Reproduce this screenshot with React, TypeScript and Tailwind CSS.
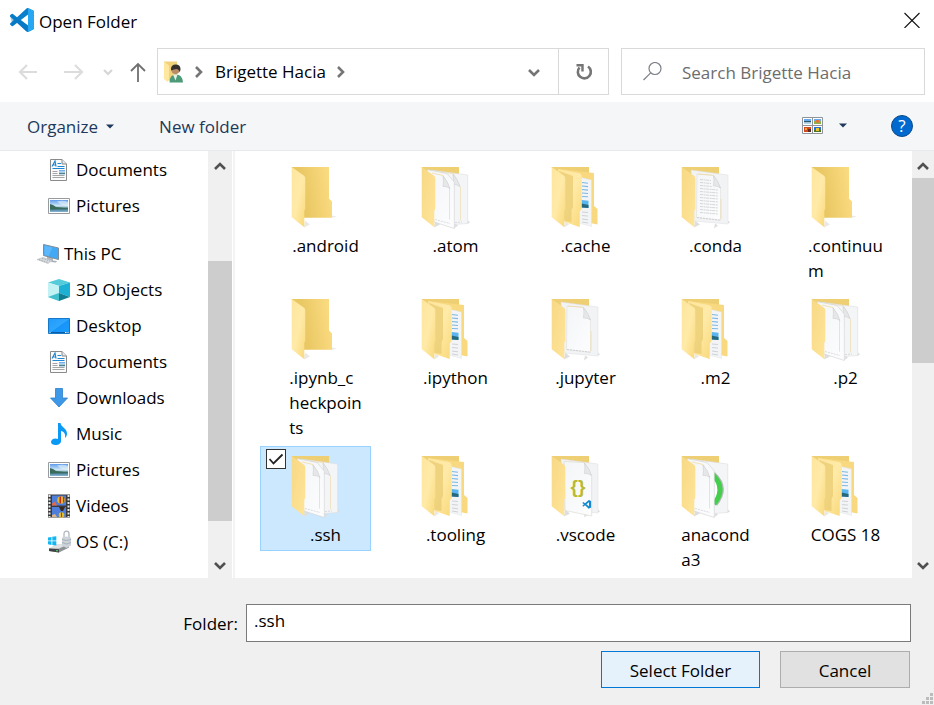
import { useState } from 'react';
import type { ReactNode } from 'react';

type FolderKind = 'empty' | 'papers' | 'nested' | 'text' | 'blank' | 'vscode' | 'disc';

const folders: { lines: string[]; kind: FolderKind }[] = [
  { lines: ['.android'], kind: 'empty' },
  { lines: ['.atom'], kind: 'papers' },
  { lines: ['.cache'], kind: 'nested' },
  { lines: ['.conda'], kind: 'text' },
  { lines: ['.continuu', 'm'], kind: 'empty' },
  { lines: ['.ipynb_c', 'heckpoin', 'ts'], kind: 'empty' },
  { lines: ['.ipython'], kind: 'nested' },
  { lines: ['.jupyter'], kind: 'blank' },
  { lines: ['.m2'], kind: 'nested' },
  { lines: ['.p2'], kind: 'papers' },
  { lines: ['.ssh'], kind: 'papers' },
  { lines: ['.tooling'], kind: 'nested' },
  { lines: ['.vscode'], kind: 'vscode' },
  { lines: ['anacond', 'a3'], kind: 'disc' },
  { lines: ['COGS 18'], kind: 'nested' },
];

const VSCODE_PATH =
  'M23.15 2.587L18.21.21a1.494 1.494 0 0 0-1.705.29l-9.46 8.63-4.12-3.128a.999.999 0 0 0-1.276.057L.327 7.261A1 1 0 0 0 .326 8.74L3.899 12 .326 15.26a1 1 0 0 0 .001 1.479L1.65 17.94a.999.999 0 0 0 1.276.057l4.12-3.128 9.46 8.63a1.492 1.492 0 0 0 1.704.29l4.942-2.377A1.5 1.5 0 0 0 24 20.06V3.939a1.5 1.5 0 0 0-.85-1.352zm-5.146 14.861L10.826 12l7.178-5.448v10.896z';

/* Gradients shared by every drawing on the page. */
function SharedDefs() {
  return (
    <svg className="absolute size-0" aria-hidden="true">
      <defs>
        <linearGradient id="back" x1="0" x2="1" y1="0.6" y2="0.4">
          <stop offset="0.3" stopColor="#e9c763" />
          <stop offset="1" stopColor="#fbdc82" />
        </linearGradient>
        <linearGradient id="flap" x1="0" x2="1" y1="0" y2="1">
          <stop offset="0" stopColor="#fde59c" />
          <stop offset="0.5" stopColor="#ffeaa8" />
          <stop offset="1" stopColor="#f9d878" />
        </linearGradient>
        <linearGradient id="flapDeep" x1="0" x2="1" y1="0" y2="1">
          <stop offset="0" stopColor="#f7d884" />
          <stop offset="1" stopColor="#ffe59a" />
        </linearGradient>
        <linearGradient id="paper" x1="0" x2="1" y1="0" y2="1">
          <stop offset="0" stopColor="#f3f5f7" />
          <stop offset="1" stopColor="#fdfdfe" />
        </linearGradient>
        <linearGradient id="sky" x1="0" x2="0" y1="0" y2="1">
          <stop offset="0" stopColor="#5e9bea" />
          <stop offset="0.5" stopColor="#d4ecf8" />
          <stop offset="0.7" stopColor="#3f7573" />
          <stop offset="0.8" stopColor="#4f86a0" />
          <stop offset="1" stopColor="#8bb9d6" />
        </linearGradient>
        <linearGradient id="screen" x1="0" x2="1" y1="0" y2="1">
          <stop offset="0" stopColor="#1e9bfa" />
          <stop offset="0.5" stopColor="#2fa6fd" />
          <stop offset="0.52" stopColor="#1794f8" />
          <stop offset="1" stopColor="#1e9dfc" />
        </linearGradient>
      </defs>
    </svg>
  );
}

function Fold({ x, y }: { x: number; y: number }) {
  return (
    <path
      d={`M${x} ${y}q.8 5 0 10.500 3.500-.5 7 2-2-7-7-12.500z`}
      fill="#e6e7e9"
      stroke="#c8c9cc"
      strokeWidth="0.5"
    />
  );
}

function FolderIcon({ kind }: { kind: FolderKind }) {
  const deep = kind !== 'empty' && kind !== 'nested';
  return (
    <svg className="h-[66px] w-[50px]" viewBox="0 0 50 66" aria-hidden="true">
      {kind === 'empty' && (
        <>
          <path d="M14 62.500l6-3-5-4zM41 53l6-1.500-5-1z" fill="#e9e9ea" />
          <path d="M1.700 2H39v31.500l3 3v16.200H14z" fill="url(#back)" />
        </>
      )}
      {kind !== 'empty' && <path d="M1.700 2H39v20H10z" fill="#efcf73" />}
      {deep && <path d="M34 63.500l4-3-3-2zM47 59l3-1.500-2-2zM14 62.500l6-3-5-4z" fill="#dddee0" />}

      {kind === 'nested' && (
        <>
          <path d="M14 62.500l5-3-4-4z" fill="#e9e9ea" />
          <path d="M8 4l36 4v33l3.500 3v15.500L40 58z" fill="#f8d980" />
          <path d="M31 12.500l10.500 2.500v46.500L29 58z" fill="#f3f4f6" stroke="#dcdde0" strokeWidth="0.4" />
          <path
            d="M32 17.500l6 .8M32 21l6 .6M32 24.500l6 .6M32 28l6 .5M32 31.500l6 .3"
            stroke="#7cb9e3"
            strokeWidth="1.100"
          />
          <path d="M31.500 35l7 .8v7.200l-7-.5z" fill="#5bb5ee" />
          <path d="M31.500 38.500l7 1.500v3l-7-.5z" fill="#26697c" />
          <path d="M32 47l6 .5M32 50.500l6 .6M32 54l6 .8M32 57l6 1" stroke="#c5c9cd" strokeWidth="0.800" />
          <path d="M8 4l20.500 4q3.200.8 3.200 3v33l-2 2.500v15.500L14.500 57z" fill="url(#flap)" />
          <path d="M9 6l14 5v31l-1.500 3v12L14 56z" fill="#e5c566" opacity="0.6" />
        </>
      )}

      {(kind === 'papers' || kind === 'disc') && (
        <path d="M11 5l36.700 5v48.500L34 59.500z" fill="#f4f5f6" stroke="#d8d9dc" strokeWidth="0.500" />
      )}
      {kind === 'papers' && (
        <>
          <path d="M16 7l17 1.500 7.500 14v33" fill="none" stroke="#ecdcb2" strokeWidth="0.700" />
          <path d="M35 57.500l7-.5" stroke="#c4c6ca" strokeWidth="0.600" strokeDasharray="2 1" />
          <Fold x={33} y={9} />
        </>
      )}
      {kind === 'disc' && (
        <>
          <path d="M33 21q12 13 1 27" fill="#fff" />
          <path d="M33 20q15 14 2 30" fill="none" stroke="#b9b9bd" strokeWidth="5.500" />
          <path d="M32 20q15 14 2 30" fill="none" stroke="#43cf4b" strokeWidth="5" />
        </>
      )}
      {(kind === 'papers' || kind === 'disc') && (
        <>
          <path
            d="M7 4.500l20 4 7.300 8.500v46.500L14 57z"
            fill="url(#paper)"
            stroke="#cfd0d4"
            strokeWidth="0.600"
          />
          <path d="M12 8l11 2.500 6.500 13v31" fill="none" stroke="#f0d999" strokeWidth="0.700" />
          <path d="M15 54.500l15 4" stroke="#c4c6ca" strokeWidth="0.600" strokeDasharray="2 1" />
          <Fold x={23} y={11} />
        </>
      )}

      {(kind === 'text' || kind === 'blank' || kind === 'vscode') && (
        <path d="M11 5l37 5v49l-34-3z" fill="#f2f3f5" stroke="#dcdde0" strokeWidth="0.500" />
      )}
      {(kind === 'text' || kind === 'blank') && (
        <>
          <path
            d="M17 9l16.500 1.500 7 12.500V55.500l-24-3z"
            fill="url(#paper)"
            stroke="#dcdad2"
            strokeWidth="0.500"
          />
          <path d="M17.500 9l15 1.200M41 34v20" stroke="#f0dba4" strokeWidth="0.800" />
          <path d="M17 52.500l23 2.500" stroke="#bfc1c5" strokeWidth="0.700" strokeDasharray="2 1" />
          <Fold x={33.500} y={10.500} />
        </>
      )}
      {kind === 'text' && (
        <path
          d="M20 14.500l11 1M20 17.500l11 1M20 20.500l12 1M20 23.500l18 1.500M20 26.500l18 1.500M20 29.500l18 1.500M20 32.500l18 1.500M20 35.500l18 1.500M20 38.500l18 1.500M20 41.500l18 1.500M20 44.500l18 1.500M20 47.500l18 1.500"
          stroke="#cfd1d4"
          strokeWidth="0.900"
          strokeDasharray="3 0.6 2 0.5"
        />
      )}
      {kind === 'vscode' && (
        <>
          <path
            d="M14 7.500l20 1 7.700 13V62L15 56.500z"
            fill="url(#paper)"
            stroke="#d9d6cb"
            strokeWidth="0.600"
          />
          <Fold x={34.500} y={9} />
          <text
            x="28"
            y="39"
            textAnchor="middle"
            fontFamily="Liberation Sans, sans-serif"
            fontSize="19"
            fontWeight="bold"
            fill="#b9b932"
          >
            {'{}'}
          </text>
          <path d={VSCODE_PATH} transform="translate(32.500 46) scale(0.36)" fill="#1689d2" />
        </>
      )}

      <path
        d="M1.700 2l12 8.500q1.600 1.200 1.600 3V44l-1 1.700v16.600l-12.600-10z"
        fill={deep ? 'url(#flapDeep)' : 'url(#flap)'}
      />
    </svg>
  );
}

function VsCodeLogo() {
  return (
    <svg className="size-6" viewBox="0 0 24 24" aria-hidden="true">
      <path d={VSCODE_PATH} fill="#0a7fcc" />
      <path d="M2.900 18l4.100-3.100L16.500 23.500l1.500-6L.9 5.900.3 7.300v1.400z" fill="#0571b8" opacity="0.4" />
      <path d="M18 .1l5.200 2.500q.8.500.8 1.400v16q0 1-.8 1.400L18 23.900z" fill="#27a7f2" />
    </svg>
  );
}

function DocumentIcon() {
  return (
    <svg className="h-6 w-[22px]" viewBox="0 0 22 24" aria-hidden="true">
      <path d="M2.500 1.500h11.500l4.500 4.500v16.500h-16z" fill="#fbfbfb" stroke="#8a8a8a" />
      <path d="M14 1.500v4.500h4.500" fill="#e6e6e6" stroke="#8a8a8a" />
      <path d="M4 8.500l3-5.500 1 5.500M5 7h3" fill="none" stroke="#1c88d6" strokeWidth="1.200" />
      <path d="M9.500 5.500h3.500M9.500 8.500h7M4.500 10.500h12" stroke="#1c88d6" />
      <path d="M4.500 13.500h5M4.500 15.500h5M4.500 17.500h12M4.500 19.500h12" stroke="#a5a5a5" />
      <path d="M11 12h6v4.500h-6z" fill="url(#sky)" />
    </svg>
  );
}

function PictureIcon() {
  return (
    <svg className="h-6 w-[22px]" viewBox="0 0 22 24" aria-hidden="true">
      <path d="M.5 4.500h21v15H.5z" fill="#fff" stroke="#989b9e" />
      <path d="M2 6h18v12H2z" fill="url(#sky)" />
      <path d="M9 7.500q6-1.500 11 .5v4q-6 .5-11-4.500z" fill="#e6f4fa" opacity="0.6" />
      <path d="M2 10q3 .5 6 3l12 1.500v.5q-9 0-18 .5z" fill="#3b6b5a" />
    </svg>
  );
}

function ComputerIcon() {
  return (
    <svg className="h-6 w-6" viewBox="0 0 24 24" aria-hidden="true">
      <path d="M11 14l6 2v3l-6-1z" fill="#b3b8bd" />
      <path d="M7.500 2.500l15 3.500v11.500L7.500 13.500z" fill="#44a9f5" stroke="#7d8c9a" />
      <path d="M8.500 3.500l8 2-4 8.500-4-1z" fill="#75c5ff" opacity="0.5" />
      <path d="M1 17.500l6-2 9 3-4 3z" fill="#d9dde0" stroke="#aeb4ba" strokeWidth="0.600" />
      <path d="M3 17.500l9 3M6 16.500l8 2.500" stroke="#9da4ab" strokeWidth="0.800" strokeDasharray="1.500 1" />
      <path d="M16 18.500l5 .5-1 1.500-5-.5z" fill="#a8aeb4" />
    </svg>
  );
}

function CubeIcon() {
  return (
    <svg className="h-6 w-[22px]" viewBox="0 0 22 24" aria-hidden="true">
      <path d="M0 4.500L11 1l11 3.500L11 8z" fill="#53cbda" />
      <path d="M0 4.500L11 8v15L0 19z" fill="#b3ecf0" />
      <path d="M22 4.500L11 8v7l11 4z" fill="#1bb0d4" />
      <path d="M0 4.500L11 8v7L0 19z" fill="#c2f2f4" />
      <path d="M0 19l11-4v8z" fill="#41bfcb" />
      <path d="M22 19l-11-4v8z" fill="#0f7d92" />
    </svg>
  );
}

function DesktopIcon() {
  return (
    <svg className="h-6 w-[22px]" viewBox="0 0 22 24" aria-hidden="true">
      <path d="M.5 4.500h21v15H.5z" fill="url(#screen)" stroke="#1678c6" />
      <path d="M1 18.500h20" stroke="#0b5da6" />
      <path d="M1.500 18.500h1M17 18.500h1.500M19.500 18.500h1" stroke="#fff" />
    </svg>
  );
}

function DownloadIcon() {
  return (
    <svg className="h-6 w-[22px]" viewBox="0 0 22 24" aria-hidden="true">
      <path d="M7.500 2.500h7v9.500h5L11 21 2.500 12h5z" fill="#3d98e8" stroke="#2b7fca" strokeWidth="0.800" />
    </svg>
  );
}

function MusicIcon() {
  return (
    <svg className="h-6 w-[22px]" viewBox="0 0 22 24" aria-hidden="true">
      <path
        d="M10 1h2.500c.5 4 6.500 5.500 6.500 10.500 0 2-1 3.500-2 4.500 1-5-2-6.500-4-7v10c0 2.500-2.500 4-5.500 4-2.500 0-4.500-1.200-4.500-3s2-3.500 4.500-3.500c1 0 2 .2 2.500.5z"
        fill="#0a9af5"
      />
    </svg>
  );
}

function VideoIcon() {
  return (
    <svg className="h-6 w-[22px]" viewBox="0 0 22 24" aria-hidden="true">
      <path d="M0 .5h22v23H0z" fill="#3a3a3a" />
      <path d="M1.500 1v22M20.500 1v22" stroke="#e8e8e8" strokeWidth="2" strokeDasharray="2 1.500" />
      <path d="M4 1.500h14v10H4zM4 13h14v10H4z" fill="#4d7edb" />
      <circle cx="13" cy="6" r="3.800" fill="#e0b52a" />
      <path d="M11.500 2.500h1.500v7h-1.500zM15 3h1.200v5.500H15z" fill="#c72d22" />
      <path d="M4 9.500l3-2 2 4H4z" fill="#e06a4a" />
      <path d="M11 13h6l-2 4h-2z" fill="#3b2a1c" />
      <circle cx="13.500" cy="21" r="2.800" fill="#e5bc2c" />
      <path d="M13 18.500h1v4.500h-1z" fill="#c72d22" />
      <path d="M4 21l3-1 2 3H4z" fill="#d8b48a" />
    </svg>
  );
}

function DriveIcon() {
  return (
    <svg className="h-6 w-[22px] overflow-visible" viewBox="0 0 22 24" aria-hidden="true">
      <path d="M1 18.500l7-4.500h13l-5 4.500z" fill="#dfe1e3" />
      <path d="M1 18.500h10l10-4.500v3.500l-10 5-10-1.500z" fill="#8d9297" />
      <path d="M1 18.500l10 .8v3.200L1 21z" fill="#3f4346" />
      <path d="M8 20.300h2v1H8z" fill="#59dd65" />
      <path
        d="M0 7.500l3.500-.6v3.600H0zM4.300 6.800l4-.6v4.300h-4zM0 11.300h3.500v3.600L0 14.300zM4.300 11.300h4v4.300l-4-.6z"
        fill="#13b5f2"
      />
      <path d="M16 8V4q0-2.800 2.500-2.800T21 4v4" fill="none" stroke="#b3b9be" strokeWidth="1.300" />
      <path d="M14 7.500l4.500-1 4.500 1v8l-4.500 2.500-4.500-2.500z" fill="#cdd3d8" />
      <path d="M14 9.500l4.500 1 4.500-1M14 12.500l4.500 1.500 4.500-1.500" fill="none" stroke="#9aa7b1" strokeWidth="0.800" />
    </svg>
  );
}

function UserFolderIcon() {
  return (
    <svg className="h-6 w-5" viewBox="0 0 20 24" aria-hidden="true">
      <path d="M1 1.500h13v19H4z" fill="#f1d27a" />
      <path d="M6.500 22.500q0-8 6.500-8t7 8z" fill="#4d9a78" />
      <path d="M10 14.500l2.500 6 2-6z" fill="#e6f0ea" />
      <circle cx="12.500" cy="10" r="4" fill="#b98a66" />
      <path d="M8 9q0-4.500 4.800-4.500T17.500 9.500l-.7 3q-.8-3.500-3.300-3.500t-5.500 1.500z" fill="#33302e" />
      <path d="M1 1.500l5 4v13l-1.500 3.500L1 19z" fill="#ffe79f" />
    </svg>
  );
}

function ViewIcon() {
  return (
    <svg className="h-[17px] w-[21px]" viewBox="0 0 21 17" aria-hidden="true">
      <path d="M.5.500h20v16H.5zM10.500.500v16M.5 8.500h20" fill="#fff" stroke="#8f949a" />
      <path d="M2 2h7v2H2zM12 2h7v2h-7z" fill="#68a8ee" />
      <path d="M2 4h7v1.500H2z" fill="#2b5969" />
      <path d="M2 5.500h7V7H2z" fill="#b5d8ec" />
      <path d="M12 4h7v3h-7z" fill="#8cb04a" />
      <path d="M14 3h3v2.500h-3z" fill="#e4703a" />
      <path d="M2 10h7v5H2z" fill="#d24a1e" />
      <path d="M6 12h3v3H6z" fill="#5f2a1f" />
      <path d="M3 11h2v2H3z" fill="#f2a33a" />
      <path d="M12 10h7v3h-7z" fill="#2c6fd0" />
      <path d="M12 13h7v2h-7z" fill="#4c7328" />
      <path d="M14 11h3v3h-3z" fill="#e9c52d" />
    </svg>
  );
}

function Chevron({ dir, color = '#757575' }: { dir: 'up' | 'down' | 'right'; color?: string }) {
  const paths = { up: 'M2 9l5-5 5 5', down: 'M2 5l5 5 5-5', right: 'M4 2l5 5-5 5' };
  return (
    <svg className="size-3.5" viewBox="0 0 14 14" fill="none" stroke={color} strokeWidth="2.600" aria-hidden="true">
      <path d={paths[dir]} />
    </svg>
  );
}

function Caret() {
  return (
    <svg className="h-[5px] w-2" viewBox="0 0 8 5" aria-hidden="true">
      <path d="M0 .500h8L4 4.500z" fill="#1e395b" />
    </svg>
  );
}

function ScrollBar({ before, thumb, after, width }: { before: number; thumb: number; after: number; width: string }) {
  return (
    <div className={`flex shrink-0 flex-col bg-[#f0f0f0] ${width}`}>
      <button type="button" aria-label="Scroll up" className="flex h-[27px] shrink-0 items-center justify-center pt-1">
        <Chevron dir="up" color="#505050" />
      </button>
      <div style={{ flex: `${before} 0 0` }} />
      <div className="bg-[#cdcdcd]" style={{ flex: `${thumb} 0 0` }} />
      <div style={{ flex: `${after} 0 0` }} />
      <button type="button" aria-label="Scroll down" className="flex h-[27px] shrink-0 items-center justify-center">
        <Chevron dir="down" color="#505050" />
      </button>
    </div>
  );
}

function NavItem({ icon, children, root = false }: { icon: ReactNode; children: ReactNode; root?: boolean }) {
  return (
    <li>
      <a
        href="#"
        className={`flex h-9 items-center whitespace-nowrap ${root ? 'mt-3 gap-1 pl-9' : 'gap-1.5 pl-12'}`}
      >
        {icon}
        <span>{children}</span>
      </a>
    </li>
  );
}

function FolderTile({
  lines,
  kind,
  selected,
  onToggle,
}: {
  lines: string[];
  kind: FolderKind;
  selected: boolean;
  onToggle: () => void;
}) {
  return (
    <label
      className={`relative flex w-[111px] flex-col border pb-[3px] ${
        selected ? 'border-[#99d1ff] bg-[#cce8ff]' : 'border-transparent'
      }`}
    >
      <input
        type="checkbox"
        checked={selected}
        onChange={onToggle}
        className={`absolute top-0.5 left-[5px] size-5 appearance-none border border-[#333] bg-white ${
          selected ? '' : 'opacity-0'
        }`}
      />
      {selected && (
        <svg
          className="pointer-events-none absolute top-0.5 left-[5px] size-5"
          viewBox="0 0 20 20"
          fill="none"
          stroke="#222"
          strokeWidth="1.800"
          aria-hidden="true"
        >
          <path d="M3.500 10l4 4.500L16.500 5.500" />
        </svg>
      )}
      <span className="h-[75px] pt-[7px] pl-[29px]">
        <FolderIcon kind={kind} />
      </span>
      <span className="flex justify-center pl-5 leading-[25px]">
        <span className="whitespace-nowrap">
          {lines.map((line) => (
            <span key={line} className="block">
              {line}
            </span>
          ))}
        </span>
      </span>
    </label>
  );
}

export default function App() {
  const [selected, setSelected] = useState('.ssh');
  const [folderName, setFolderName] = useState('.ssh');

  const toggle = (name: string) => {
    const next = name === selected ? '' : name;
    setSelected(next);
    setFolderName(next);
  };

  return (
    <div className="flex h-screen flex-col overflow-hidden bg-white font-['Open_Sans','Noto_Sans',sans-serif] text-[17px] leading-6 text-black">
      <SharedDefs />

      <header className="flex h-12 shrink-0 items-center gap-[5px] pr-3.5 pb-2 pl-2.5">
        <VsCodeLogo />
        <h1 className="grow pt-1">Open Folder</h1>
        <button type="button" aria-label="Close">
          <svg className="size-4" viewBox="0 0 16 16" stroke="#111" strokeWidth="1.100" aria-hidden="true">
            <path d="M.5 1l15 15M15.500 1l-15 15" />
          </svg>
        </button>
      </header>

      <nav className="flex h-[54px] shrink-0 items-start pr-[9px] pl-[18px]" aria-label="Location">
        <div className="flex h-[47px] w-[139px] shrink-0 items-center pt-px">
          <button type="button" aria-label="Back" className="mr-[26px]">
            <svg className="size-5" viewBox="0 0 20 20" fill="none" stroke="#dcdcdc" strokeWidth="2.200" aria-hidden="true">
              <path d="M19 10H2M9 3l-7 7 7 7" />
            </svg>
          </button>
          <button type="button" aria-label="Forward" className="mr-[19px]">
            <svg className="size-5" viewBox="0 0 20 20" fill="none" stroke="#dcdcdc" strokeWidth="2.200" aria-hidden="true">
              <path d="M0 10h18M11 3l7 7-7 7" />
            </svg>
          </button>
          <button type="button" aria-label="Recent locations" className="mr-[17px]">
            <svg className="size-2.5" viewBox="0 0 10 10" fill="none" stroke="#d6d6d6" strokeWidth="2.200" aria-hidden="true">
              <path d="M1 3l4 4 4-4" />
            </svg>
          </button>
          <button type="button" aria-label="Up">
            <svg className="h-5 w-4" viewBox="0 0 16 20" fill="none" stroke="#707070" strokeWidth="1.800" aria-hidden="true">
              <path d="M8 20V2M1 9l7-7 7 7" />
            </svg>
          </button>
        </div>
        <div className="flex h-[47px] grow items-center border border-[#d9d9d9]">
          <div className="flex grow items-center pl-[5px]">
            <UserFolderIcon />
            <span className="ml-[9px]">
              <Chevron dir="right" />
            </span>
            <a href="#" className="mr-2 ml-[9px] whitespace-nowrap">
              Brigette Hacia
            </a>
            <Chevron dir="right" />
          </div>
          <button type="button" aria-label="Previous locations" className="mr-[17px]">
            <Chevron dir="down" />
          </button>
          <button
            type="button"
            aria-label="Refresh"
            className="flex w-[50px] items-center justify-center self-stretch border-l border-[#d9d9d9]"
          >
            <svg className="size-5" viewBox="0 0 20 20" fill="none" stroke="#757575" strokeWidth="2.600" aria-hidden="true">
              <path d="M14 4.500a6.500 6.500 0 1 1-8.500 1" />
              <path d="M2.500 3.300h6V9.500" strokeWidth="2.400" />
            </svg>
          </button>
        </div>
        <label className="ml-3 flex h-[47px] w-[304px] shrink-0 items-center border border-[#d9d9d9] pl-5">
          <svg className="size-5" viewBox="0 0 20 20" fill="none" stroke="#7c8087" strokeWidth="1.200" aria-hidden="true">
            <circle cx="13" cy="6.500" r="6" />
            <path d="M8.700 10.800L1.500 18" />
          </svg>
          <input
            type="text"
            aria-label="Search Brigette Hacia"
            placeholder="Search Brigette Hacia"
            className="ml-5 w-0 grow pt-0.5 outline-none placeholder:text-[#6d6d6d]"
          />
        </label>
      </nav>

      <div className="flex h-[49px] shrink-0 items-center border-b border-[#e8e9eb] bg-[#f5f6f7] pr-[21px] pb-px pl-[27px] text-[#1e395b]">
        <button type="button" className="flex items-center gap-2 pt-0.5">
          Organize
          <Caret />
        </button>
        <button type="button" className="ml-[45px] pt-0.5">
          New folder
        </button>
        <button type="button" aria-label="Change your view" className="ml-auto">
          <ViewIcon />
        </button>
        <button type="button" aria-label="More view options" className="mr-11 ml-4">
          <Caret />
        </button>
        <button
          type="button"
          aria-label="Help"
          className="flex size-[22px] items-center justify-center rounded-full border border-[#0a4a8a] bg-[#0069cf] text-white"
        >
          ?
        </button>
      </div>

      <main className="flex min-h-0 grow">
        <nav className="w-[208px] shrink-0 overflow-hidden pt-px" aria-label="Places">
          <ul>
            <NavItem icon={<DocumentIcon />}>Documents</NavItem>
            <NavItem icon={<PictureIcon />}>Pictures</NavItem>
            <NavItem icon={<ComputerIcon />} root>
              This PC
            </NavItem>
            <NavItem icon={<CubeIcon />}>3D Objects</NavItem>
            <NavItem icon={<DesktopIcon />}>Desktop</NavItem>
            <NavItem icon={<DocumentIcon />}>Documents</NavItem>
            <NavItem icon={<DownloadIcon />}>Downloads</NavItem>
            <NavItem icon={<MusicIcon />}>Music</NavItem>
            <NavItem icon={<PictureIcon />}>Pictures</NavItem>
            <NavItem icon={<VideoIcon />}>Videos</NavItem>
            <NavItem icon={<DriveIcon />}>OS (C:)</NavItem>
          </ul>
        </nav>
        <ScrollBar before={83} thumb={260} after={30} width="w-6" />
        <div className="ml-px w-0.5 shrink-0 bg-[#f3f3f3]" />
        <div className="grid grow grid-cols-[repeat(auto-fill,130px)] content-start items-start gap-y-0.5 overflow-hidden pt-1.5 pl-[25px]">
          {folders.map(({ lines, kind }) => {
            const name = lines.join('');
            return (
              <FolderTile
                key={name}
                lines={lines}
                kind={kind}
                selected={name === selected}
                onToggle={() => toggle(name)}
              />
            );
          })}
        </div>
        <ScrollBar before={0} thumb={185} after={188} width="w-[22px]" />
      </main>

      <footer className="relative flex h-[127px] shrink-0 flex-col gap-[9px] bg-[#f0f0f0] pt-[26px]">
        <div className="flex items-center pr-[23px]">
          <label htmlFor="folder-name" className="w-[246px] shrink-0 pt-0.5 pr-2 text-right">
            Folder:
          </label>
          <input
            id="folder-name"
            type="text"
            value={folderName}
            onChange={(event) => setFolderName(event.target.value)}
            className="h-[38px] w-0 grow border border-[#7a7a7a] bg-white px-[7px] pb-1.5 outline-none"
          />
        </div>
        <div className="flex justify-end gap-5 pr-6">
          <button type="button" className="h-[37px] w-[159px] border border-[#0078d7] bg-[#e5f1fb] pt-0.5">
            Select Folder
          </button>
          <button type="button" className="h-[37px] w-[130px] border border-[#adadad] bg-[#e1e1e1] pt-0.5">
            Cancel
          </button>
        </div>
        <svg className="absolute right-0 bottom-0 size-3" viewBox="0 0 12 12" fill="#bcbcbc" aria-hidden="true">
          <path d="M8 0h3v3H8zM4 4h3v3H4zM8 4h3v3H8zM0 8h3v3H0zM4 8h3v3H4zM8 8h3v3H8z" />
        </svg>
      </footer>
    </div>
  );
}
